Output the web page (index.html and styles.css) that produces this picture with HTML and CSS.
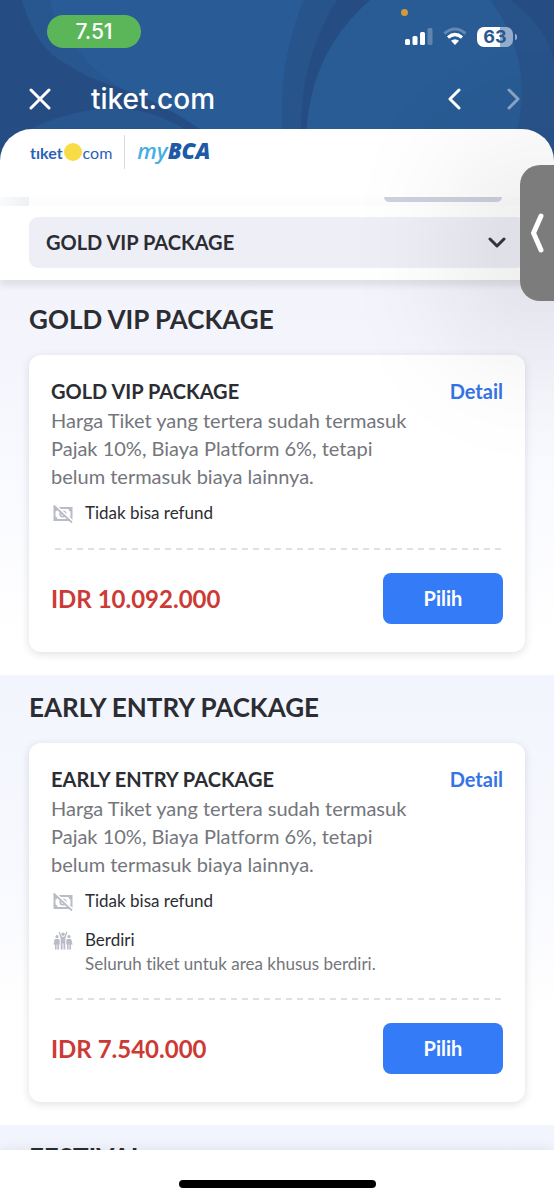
FILE: index.html
```html
<!DOCTYPE html>
<html lang="id">
<head>
<meta charset="utf-8">
<meta name="viewport" content="width=device-width, initial-scale=1">
<title>tiket.com</title>
<link rel="stylesheet" href="styles.css">
</head>
<body>
<svg class="defs" aria-hidden="true">
  <symbol id="no-refund" viewBox="0 0 20 20">
    <path fill="currentColor" fill-rule="evenodd" d="M0.500 3H19.500V17H0.500zM4.500 5Q4.500 7 2.500 7.500V12.500Q4.500 13 4.500 15H15.500Q15.500 13 17.500 12.500V7.500Q15.500 7 15.500 5z"/>
    <circle cx="10" cy="10" r="2.800" fill="none" stroke="currentColor" stroke-width="1.600"/>
    <path d="M2.200 0.800 20 17.200" stroke="#fff" stroke-width="1.800"/>
    <path d="M0.600 1.500 19 18.600" stroke="currentColor" stroke-width="1.800"/>
  </symbol>
  <symbol id="standing" viewBox="0 0 20 20">
    <g fill="currentColor">
      <circle cx="10" cy="3.200" r="1.800"/>
      <path d="M5.600 1.300 6.800 .8 8.300 5.300Q10 6.300 11.700 5.300L13.200 .8 14.400 1.300 12.300 7.500V18.500H10.500V12.500H9.500V18.500H7.700V7.500z"/>
      <circle cx="4" cy="5.600" r="1.600"/>
      <path d="M2.500 8H5.500Q6.700 8 6.700 9.500V13.500H6V18.500H4.400V13.500H3.600V18.500H2V13L1.200 14 .5 13.500 1.500 9Q1.700 8 2.500 8z"/>
      <circle cx="16" cy="5.600" r="1.600"/>
      <path d="M17.500 8H14.500Q13.300 8 13.300 9.500V13.500H14V18.500H15.600V13.500H16.400V18.500H18V13L18.800 14 19.500 13.500 18.500 9Q18.300 8 17.500 8z"/>
    </g>
  </symbol>
</svg>
<div class="app">
  <header class="top">
    <svg class="top-art" viewBox="0 0 554 170" preserveAspectRatio="none" aria-hidden="true">
      <path fill="#295c96" d="M22 0C40 55 78 72 120 88Q180 110 220 145H300C296 100 305 45 337 0z"/>
      <path fill="#28578f" d="M22 0C30 30 45 52 63 62Q90 80 120 88Q90 68 80 52Q55 30 50 0z"/>
      <path fill="#28548c" d="M304 0C284 45 278 100 284 145H302C298 100 308 45 337 0z"/>
      <path fill="#28568f" d="M0 150Q40 115 105 108Q160 105 215 150z"/>
      <path fill="#28538a" d="M370 0C325 40 302 90 306 170H554V60Q545 25 510 0z"/>
      <path fill="#295b94" d="M370 0C325 40 302 90 306 170H500C535 110 525 45 490 0z"/>
    </svg>
    <div class="status">
      <span class="time">7.51</span>
      <span class="mic-dot"></span>
      <div class="status-icons">
        <svg width="28" height="20" viewBox="0 0 28 20" role="img" aria-label="Sinyal">
          <g fill="#fff"><rect x="0" y="12" width="5" height="6" rx="1.500"/><rect x="7.500" y="9" width="5" height="9" rx="1.500"/><rect x="15" y="5" width="5" height="13" rx="1.500"/></g>
          <rect x="22.500" y="1" width="5" height="17" rx="1.500" fill="#fff" opacity=".25"/>
        </svg>
        <svg width="24" height="20" viewBox="0 0 24 20" role="img" aria-label="Wi-Fi">
          <g fill="none" stroke="#fff"><path d="M1.500 6.500Q12-2.500 22.500 6.500" stroke-width="3" opacity=".28"/><path d="M5 10.500Q12 4.500 19 10.500" stroke-width="3.200"/></g>
          <path d="M12 18 8 13.800Q12 10.600 16 13.800z" fill="#fff"/>
        </svg>
        <span class="battery">63</span>
      </div>
    </div>
    <div class="nav">
      <button class="icon-btn" aria-label="Tutup"><svg width="22" height="22" viewBox="0 0 22 22"><path d="M2 2 20 20M20 2 2 20"/></svg></button>
      <h1 class="nav-title">tiket.com</h1>
      <button class="icon-btn" aria-label="Kembali"><svg width="14" height="22" viewBox="0 0 14 22"><path d="M12 2 3 11 12 20"/></svg></button>
      <button class="icon-btn" aria-label="Maju" disabled><svg width="14" height="22" viewBox="0 0 14 22"><path d="M2 2 11 11 2 20"/></svg></button>
    </div>
  </header>

  <main class="sheet">
    <div class="brands">
      <span class="tiket"><b>tıket</b><i class="tiket-dot"></i>com</span>
      <span class="mybca"><span class="my">my</span>BCA</span>
    </div>
    <div class="peek"><span class="peek-card"><span class="peek-btn"></span></span></div>
    <div class="filter">
      <label class="select-wrap">
        <select class="select" aria-label="Kategori paket">
          <option>GOLD VIP PACKAGE</option>
          <option>EARLY ENTRY PACKAGE</option>
          <option>FESTIVAL</option>
        </select>
        <svg class="chevron" width="18" height="12" viewBox="0 0 18 12" aria-hidden="true"><path d="M2 2 9 9 16 2"/></svg>
      </label>
    </div>

    <section class="group group-first">
      <h2 class="group-title">GOLD VIP PACKAGE</h2>
      <article class="card">
        <div class="card-head"><h3 class="card-title">GOLD VIP PACKAGE</h3><a class="detail" href="#">Detail</a></div>
        <p class="desc">Harga Tiket yang tertera sudah termasuk Pajak 10%, Biaya Platform 6%, tetapi belum termasuk biaya lainnya.</p>
        <ul class="facts">
          <li class="fact"><svg class="fact-icon"><use href="#no-refund"/></svg><span>Tidak bisa refund</span></li>
        </ul>
        <div class="dash"></div>
        <div class="buy"><span class="price">IDR 10.092.000</span><button class="pick">Pilih</button></div>
      </article>
    </section>

    <section class="group">
      <h2 class="group-title">EARLY ENTRY PACKAGE</h2>
      <article class="card">
        <div class="card-head"><h3 class="card-title">EARLY ENTRY PACKAGE</h3><a class="detail" href="#">Detail</a></div>
        <p class="desc">Harga Tiket yang tertera sudah termasuk Pajak 10%, Biaya Platform 6%, tetapi belum termasuk biaya lainnya.</p>
        <ul class="facts">
          <li class="fact"><svg class="fact-icon"><use href="#no-refund"/></svg><span>Tidak bisa refund</span></li>
          <li class="fact"><svg class="fact-icon"><use href="#standing"/></svg><div>Berdiri<p class="fact-note">Seluruh tiket untuk area khusus berdiri.</p></div></li>
        </ul>
        <div class="dash"></div>
        <div class="buy"><span class="price">IDR 7.540.000</span><button class="pick">Pilih</button></div>
      </article>
    </section>

    <section class="group">
      <h2 class="group-title">FESTIVAL</h2>
    </section>
  </main>

  <footer class="home"><span class="home-bar"></span></footer>
  <div class="tab-layer">
    <button class="side-tab" aria-label="Buka panel"><svg width="14" height="40" viewBox="0 0 14 40"><path d="M11 3 3.500 20 11 37"/></svg></button>
  </div>
</div>
</body>
</html>
```
FILE: styles.css
```css
* { box-sizing: border-box; }
body { margin: 0; font-family: Lato, "Open Sans", sans-serif; font-variant-ligatures: none; color: #2b2d33; }
h1, h2, h3, p, ul { margin: 0; padding: 0; }
ul { list-style: none; }
button { border: 0; padding: 0; font: inherit; cursor: pointer; }
.defs { position: absolute; width: 0; height: 0; }

.app { position: relative; display: flex; flex-direction: column; height: 100vh; overflow: hidden; background: #254d83; }

.top-art { position: absolute; top: 0; left: 0; width: 100%; height: 170px; }
.status { position: relative; display: flex; align-items: center; justify-content: space-between; padding: 15px 41px 0 47px; }
.time { width: 94px; border-radius: 17px; background: #5bb65a; color: #fff; font: 500 21px/33px Inter, sans-serif; text-align: center; }
.mic-dot { position: absolute; top: 9px; right: 146px; width: 7px; height: 7px; border-radius: 50%; background: #d19a3f; }
.status-icons { display: flex; align-items: center; gap: 10px; padding-top: 11px; }
.battery { position: relative; width: 36px; border-radius: 7px; background: linear-gradient(90deg, #fff 63%, #94adca 63%); color: #295890; font: 700 18px/20px Inter, sans-serif; text-align: center; }
.battery::after { content: ""; position: absolute; right: -4px; top: 7px; width: 2px; height: 6px; border-radius: 0 2px 2px 0; background: #94adca; }
.nav { position: relative; display: flex; align-items: center; padding: 33px 33px 12px 29px; color: #fff; }
.nav-title { flex: 1; margin-left: 40px; font: 500 28px/36px Inter, sans-serif; }
.icon-btn { display: flex; background: none; }
.icon-btn svg, .chevron, .side-tab svg { fill: none; stroke: #fff; stroke-width: 3; stroke-linecap: round; stroke-linejoin: round; }
.icon-btn + .icon-btn { margin-left: 46px; }
.icon-btn:disabled { opacity: .45; }

.sheet { position: relative; flex: 1; min-height: 0; overflow-y: auto; scrollbar-width: none; border-radius: 32px 32px 0 0; background: #fff; }
.brands { display: flex; align-items: flex-start; height: 68px; padding: 6px 30px; }
.tiket { display: flex; align-items: center; height: 34px; padding-right: 12px; border-right: 1px solid #d6dae6; color: #2b61b8; font-size: 16px; }
.tiket-dot { width: 18px; height: 18px; margin: 0 1px; border-radius: 50%; background: #f8dc45; }
.mybca { margin-left: 12px; color: #2059a5; font: italic 800 22px/30px "Open Sans", sans-serif; }
.my { color: #45aee2; font-weight: 600; }
.peek { height: 9px; padding-left: 29px; background: linear-gradient(90deg, #fafbfc, #eff0f4 29px, #fdfdfe 29px); }
.peek-card { display: flex; justify-content: flex-end; padding-right: 52px; }
.peek-btn { width: 118px; height: 5px; border-radius: 0 0 10px 10px; background: #ced2de; }
.filter { position: relative; padding: 11px 29px 12px; background: #fff; box-shadow: 0 6px 6px rgba(0, 0, 0, .08); }
.select-wrap { position: relative; display: block; }
.select { display: block; width: 100%; height: 51px; padding: 0 17px 2px; border: 0; border-radius: 9px; background: #eeeef7; color: #2b2d33; font: 700 20px Lato, sans-serif; appearance: none; }
.chevron { position: absolute; top: 20px; right: 19px; stroke: #36383e; }

.group { padding: 16px 29px 23px; background: linear-gradient(#f2f5fd, #f8f9fe 200px, #fff 340px); }
.group-first { padding-top: 23px; background: linear-gradient(#f2f3fb, #f9faff 200px, #fff 360px); }
.group-title { margin-bottom: 20px; font-size: 26px; font-weight: 700; line-height: 32px; }
.card { padding: 23px 22px 28px; border-radius: 12px; background: #fff; box-shadow: 0 2px 8px rgba(30, 35, 60, .14); }
.card-head { display: flex; justify-content: space-between; margin-bottom: 2px; line-height: 26px; }
.card-title, .detail, .pick { font-size: 20px; font-weight: 700; }
.detail { color: #3573e6; text-decoration: none; }
.desc { max-width: 376px; color: #74767c; font-size: 20px; line-height: 28px; }
.facts { display: grid; gap: 15px; margin-top: 11px; font-size: 17px; line-height: 24px; }
.fact { display: flex; gap: 12px; }
.fact-icon { flex: none; width: 20px; height: 20px; margin: 3px 0 0 2px; color: #b9bbc7; }
.fact-note { color: #74767c; line-height: 23px; }
.dash { height: 2px; margin: 23px 0 23px 4px; background: repeating-linear-gradient(90deg, #dfe0e6 0 6px, transparent 6px 11px); }
.buy { display: flex; align-items: center; justify-content: space-between; }
.price { color: #cc3a35; font-size: 24px; font-weight: 700; }
.pick { width: 120px; height: 51px; padding-bottom: 2px; border-radius: 8px; background: #347bf7; color: #fff; }

.home { position: relative; display: flex; justify-content: center; padding: 30px 0 11px; background: #fff; box-shadow: 0 -2px 12px rgba(0, 0, 0, .07); }
.home-bar { width: 197px; height: 8px; border-radius: 4px; background: #000; }

.tab-layer { position: absolute; inset: 0; overflow: hidden; pointer-events: none; }
.side-tab { position: absolute; top: 165px; right: 0; display: flex; align-items: center; justify-content: center; width: 34px; height: 136px; border-radius: 20px 0 0 20px; background: #7c7c7d; box-shadow: 0 20px 150px 10px rgba(0, 0, 0, .32); pointer-events: auto; }
.side-tab svg { stroke-width: 5; }
```
